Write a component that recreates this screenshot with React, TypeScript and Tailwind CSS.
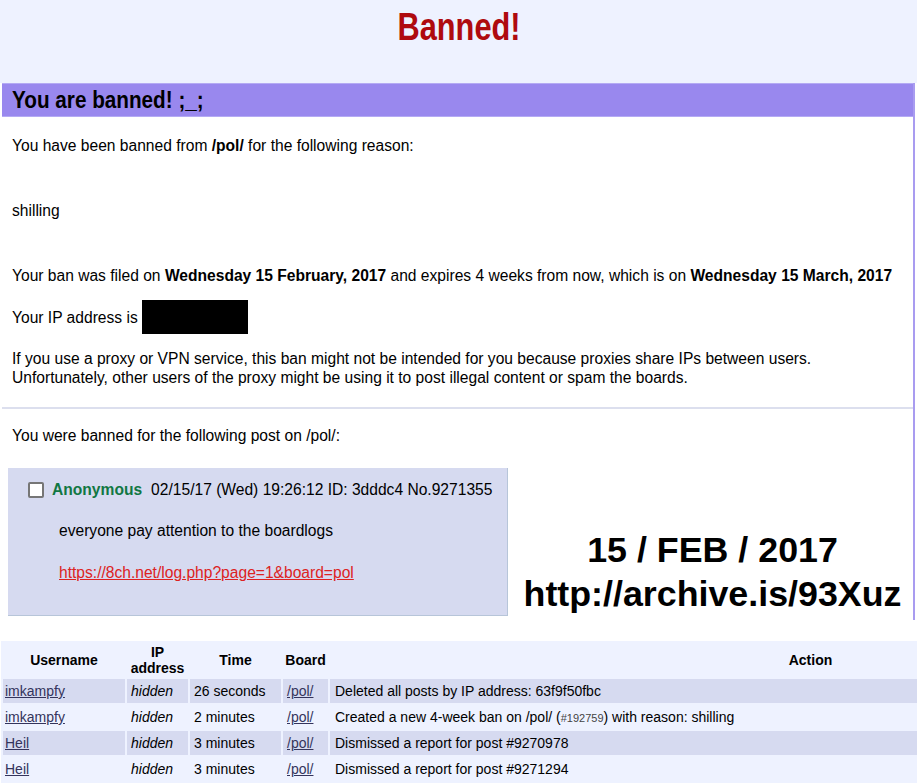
import React from 'react';

// One row of the moderation log at the bottom
interface LogRow {
  user: string;
  time: string;
  action: React.ReactNode;
}

const rows: LogRow[] = [
  { user: 'imkampfy', time: '26 seconds', action: 'Deleted all posts by IP address: 63f9f50fbc' },
  {
    user: 'imkampfy',
    time: '2 minutes',
    action: (
      <>
        Created a new 4-week ban on /pol/ (<span className="text-[11px] text-[#444]">#192759</span>) with reason: shilling
      </>
    ),
  },
  { user: 'Heil', time: '3 minutes', action: 'Dismissed a report for post #9270978' },
  { user: 'Heil', time: '3 minutes', action: 'Dismissed a report for post #9271294' },
];

const App: React.FC = () => {
  return (
    <div className="min-h-screen w-[917px] overflow-hidden bg-white font-['Liberation_Sans',Arial,sans-serif] text-black">
      {/* page title */}
      <div className="h-[83px] bg-[#eef2ff] text-center pt-[5px]">
        <h1 className="inline-block scale-x-[0.81] text-[38px] font-bold leading-[44px] text-[#af0a0f]">Banned!</h1>
      </div>

      <div className="ml-[2px] mr-[2px] bg-white border-r-2 border-[#a99cf0] pb-[4px]">
        <h2 className="h-[34px] bg-[#9988ee] border-y border-[#b4aaf4] pl-[10px] leading-[32px]">
          <span className="inline-block origin-left scale-x-[0.9] text-[23px] font-bold">You are banned! ;_;</span>
        </h2>

        <div className="px-[10px] text-[15.6px] leading-[19px]">
          <p className="mt-[19px]">
            You have been banned from <b>/pol/</b> for the following reason:
          </p>
          <p className="mt-[46px]">shilling</p>
          <p className="mt-[46px]">
            Your ban was filed on <b>Wednesday 15 February, 2017</b> and expires 4 weeks from now, which is on{' '}
            <b>Wednesday 15 March, 2017</b>
          </p>
          <p className="mt-[15px] h-[34px] flex items-center">
            Your IP address is&nbsp;<span className="inline-block h-[34px] w-[106px] bg-black" />
          </p>
          <p className="mt-[15px]">
            If you use a proxy or VPN service, this ban might not be intended for you because proxies share IPs between users.
            <br />
            Unfortunately, other users of the proxy might be using it to post illegal content or spam the boards.
          </p>
        </div>

        <hr className="mt-[20px] border-0 h-[2px] bg-[#dcdfee]" />

        <p className="mt-[17px] px-[10px] text-[15.6px] leading-[19px]">You were banned for the following post on /pol/:</p>

        <div className="mt-[23px] flex">
          {/* the post */}
          <div className="ml-[6px] w-[500px] h-[148px] bg-[#d6daf0] border-r border-b border-[#b7c5d9] pl-[20px] pt-[12px] text-[15.6px] leading-[19px]">
            <div className="flex items-center">
              <span className="inline-block h-[16px] w-[16px] border-2 border-[#767676] bg-white rounded-[2px]" />
              <span className="ml-[8px] font-bold text-[#117743]">Anonymous</span>
              <span className="ml-[9px]">02/15/17 (Wed) 19:26:12 ID: 3dddc4 No.9271355</span>
            </div>
            <div className="pl-[31px]">
              <p className="mt-[22px]">everyone pay attention to the boardlogs</p>
              <p className="mt-[23px]">
                <a className="text-[#dd2222] underline">https://8ch.net/log.php?page=1&amp;board=pol</a>
              </p>
            </div>
          </div>

          <div className="flex-1 flex flex-col justify-end items-center text-[35.8px] font-bold leading-[44px] pl-[4px]">
            <div>15 / FEB / 2017</div>
            <div>http://archive.is/93Xuz</div>
          </div>
        </div>
      </div>

      {/* mod log */}
      <div className="mt-[21px] overflow-hidden">
        <table className="ml-[1px] w-[1292px] table-fixed border-separate border-spacing-[2px] bg-[#eef2ff] text-[14px] leading-[18px]">
          <thead>
            <tr className="bg-[#eef2ff]">
              <th className="w-[122px] py-[1px] font-bold leading-[16px]">Username</th>
              <th className="w-[61px] py-[1px] font-bold leading-[16px]">IP address</th>
              <th className="w-[91px] py-[1px] font-bold leading-[16px]">Time</th>
              <th className="w-[45px] py-[1px] font-bold leading-[16px]">Board</th>
              <th className="py-[1px] font-bold leading-[16px]">Action</th>
            </tr>
          </thead>
          <tbody>
            {rows.map((r, i) => (
              <tr key={i} className={i % 2 === 0 ? 'bg-[#d6daf0]' : 'bg-[#eef2ff]'}>
                <td className="h-[24px] px-[2px]">
                  <a className="text-[#34345c] underline">{r.user}</a>
                </td>
                <td className="px-[4px] italic">hidden</td>
                <td className="px-[4px]">{r.time}</td>
                <td className="px-[4px]">
                  <a className="text-[#34345c] underline">/pol/</a>
                </td>
                <td className="px-[5px]">{r.action}</td>
              </tr>
            ))}
          </tbody>
        </table>
      </div>
    </div>
  );
};

export default App;
